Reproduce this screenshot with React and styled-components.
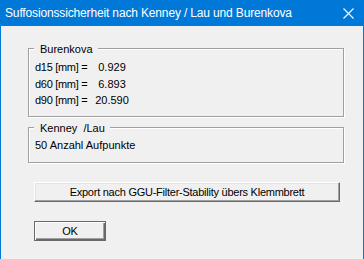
import React from "react"
import styled, { createGlobalStyle } from "styled-components"

const GlobalStyle = createGlobalStyle`
  html, body {
    margin: 0;
    padding: 0;
    background: #ffffff;
  }
`

const burenkova = [
  { label: "d15 [mm] =", value: "0.929" },
  { label: "d60 [mm] =", value: "6.893" },
  { label: "d90 [mm] =", value: "20.590" },
]

export default function App() {
  return (
    <>
      <GlobalStyle />
      <Window>
        <TitleBar>
          <Title>Suffosionssicherheit nach Kenney / Lau und Burenkova</Title>
          <CloseIcon width="11" height="11" viewBox="0 0 11 11">
            <path d="M0.5 0.5 L10.5 10.5 M10.5 0.5 L0.5 10.5" stroke="#ffffff" strokeWidth="1.1" fill="none" />
          </CloseIcon>
        </TitleBar>

        <Body>
          <Group height={69} top={10}>
            <Legend>Burenkova</Legend>
            <ValueGrid>
              {burenkova.map((row) => (
                <React.Fragment key={row.label}>
                  <Label>{row.label}</Label>
                  <Value>{row.value}</Value>
                </React.Fragment>
              ))}
            </ValueGrid>
          </Group>

          <Group height={36} top={9}>
            <Legend>Kenney&nbsp;&nbsp;/Lau</Legend>
            <Line>50 Anzahl Aufpunkte</Line>
          </Group>

          <Button width={306}>Export nach GGU-Filter-Stability übers Klemmbrett</Button>
          <Button width={72} primary>OK</Button>
        </Body>
      </Window>
    </>
  )
}

const Window = styled.div`
  width: 364px;
  height: 259px;
  display: flex;
  flex-direction: column;
  box-sizing: border-box;
  background: #0078d7;
  font-family: "Liberation Sans", Arial, sans-serif;
  font-size: 11px;
  color: #000000;
`

const TitleBar = styled.div`
  height: 26px;
  flex: none;
  display: flex;
  align-items: center;
  justify-content: space-between;
  padding: 0 10px 0 5px;
`

const Title = styled.span`
  font-family: "Liberation Sans", Arial, sans-serif;
  font-size: 12px;
  letter-spacing: -0.15px;
  color: #ffffff;
  line-height: 16px;
  margin-top: -1px;
`

const CloseIcon = styled.svg`
  display: block;
  margin-top: 1px;
`

const Body = styled.div`
  flex: 1;
  margin: 0 1px 1px 1px;
  background: #f0f0f0;
  display: flex;
  flex-direction: column;
  align-items: flex-start;
  padding: 22px 0 0 27px;
  box-sizing: border-box;
`

const Group = styled.div`
  position: relative;
  width: 316px;
  height: ${(p) => p.height}px;
  box-sizing: border-box;
  border: 1px solid #a0a0a0;
  box-shadow: inset 1px 1px 0 #ffffff, 1px 1px 0 #ffffff;
  padding: ${(p) => p.top}px 0 0 6px;
  margin-bottom: 10px;

  & + & {
    margin-bottom: 19px;
  }
`

const Legend = styled.span`
  position: absolute;
  top: -8px;
  left: 5px;
  padding: 0 5px 0 6px;
  background: #f0f0f0;
  line-height: 16px;
`

const ValueGrid = styled.div`
  display: grid;
  grid-template-columns: 56px 42px;
  grid-auto-rows: 16.5px;
  line-height: 16px;
`

const Label = styled.span`
  white-space: nowrap;
  letter-spacing: -0.3px;
`

const Value = styled.span`
  text-align: center;
`

const Line = styled.div`
  line-height: 16px;
`

const Button = styled.div`
  width: ${(p) => p.width}px;
  height: 20px;
  margin-left: 6px;
  margin-bottom: 19px;
  box-sizing: border-box;
  display: flex;
  align-items: center;
  justify-content: center;
  background: #f0f0f0;
  white-space: nowrap;
  letter-spacing: -0.25px;
  border-top: 1px solid #ffffff;
  border-left: 1px solid #ffffff;
  border-right: 1px solid #696969;
  border-bottom: 1px solid #696969;
  box-shadow: inset -1px -1px 0 #a0a0a0, inset 1px 1px 0 #e3e3e3;
  ${(p) =>
    p.primary &&
    `
    border: 1px solid #696969;
    box-shadow: inset 1px 1px 0 #ffffff, inset -1px -1px 0 #696969, inset -2px -2px 0 #a0a0a0;
  `}
`
